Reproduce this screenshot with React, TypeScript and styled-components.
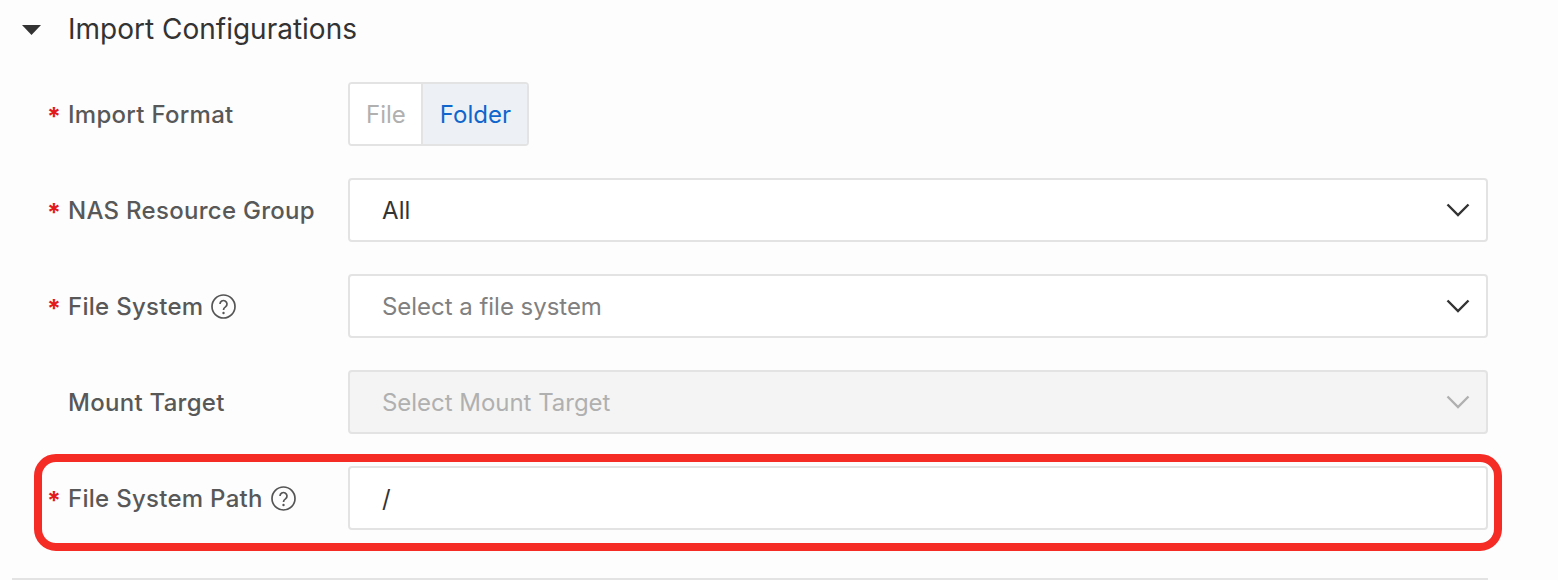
import React from "react";
import styled, { createGlobalStyle } from "styled-components";

const Global = createGlobalStyle`
  html, body { margin: 0; padding: 0; background: #fdfdfd; }
  body { font-family: Inter, "Liberation Sans", sans-serif; }
`;

const Page = styled.div`
  width: 1558px;
  height: 580px;
  overflow: hidden;
  box-sizing: border-box;
`;

const Header = styled.div`
  height: 56px;
  display: flex;
  align-items: center;
  padding-left: 22px;
  gap: 27px;
  margin-bottom: 26px;
`;

const Caret = styled.svg`
  width: 19px;
  height: 10px;
  display: block;
  margin-top: 3px;
`;

const Title = styled.div`
  font-size: 28px;
  line-height: 32px;
  color: #333;
  padding-top: 1px;
`;

const Form = styled.div`
  width: 1488px;
  padding-left: 48px;
  box-sizing: border-box;
  display: flex;
  flex-direction: column;
  gap: 32px;
`;

const Row = styled.div<{ $highlight?: boolean }>`
  position: relative;
  display: flex;
  align-items: center;
  height: 64px;
  ${(p) =>
    p.$highlight &&
    `&::after {
      content: "";
      position: absolute;
      left: -14px;
      right: -14px;
      top: -12px;
      bottom: -21px;
      border: 8px solid #f52b26;
      border-radius: 22px;
      pointer-events: none;
    }`}
`;

const Label = styled.div`
  width: 300px;
  flex: none;
  display: flex;
  align-items: center;
  font-size: 24px;
  font-weight: 550;
  color: #585858;
  letter-spacing: 0.28px;
  padding-top: 1px;
`;

const Star = styled.span`
  width: 21px;
  margin-left: -1px;
  flex: none;
  color: #e31a1a;
  font-size: 25px;
  line-height: 1;
  height: 20px;
  font-weight: 700;
  letter-spacing: 0;
`;

const Help = styled.svg`
  width: 25px;
  height: 25px;
  margin-left: 8px;
  display: block;
`;

const Segmented = styled.div`
  display: flex;
  height: 64px;
  box-sizing: border-box;
  border: 2px solid #e3e3e3;
  border-radius: 4px;
  overflow: hidden;
  background: #fff;
`;

const Segment = styled.div<{ $active?: boolean }>`
  display: flex;
  align-items: center;
  padding: 1px 16px 0;
  font-size: 24px;
  color: ${(p) => (p.$active ? "#0f66cc" : "#b0b0b0")};
  background: ${(p) => (p.$active ? "#edf0f5" : "#fff")};
  ${(p) => (p.$active ? "border-left: 2px solid #e3e3e3; padding-left: 17px;" : "padding-right: 15px;")}
`;

const Field = styled.div<{ $disabled?: boolean }>`
  flex: 1;
  height: 64px;
  box-sizing: border-box;
  border: 2px solid #e3e3e3;
  border-radius: 4px;
  background: ${(p) => (p.$disabled ? "#f4f4f4" : "#fff")};
  display: flex;
  align-items: center;
  justify-content: space-between;
  padding: 0 16px 0 32px;
  font-size: 24px;
`;

const Value = styled.span<{ $tone: "value" | "placeholder" | "disabled" }>`
  color: ${(p) => (p.$tone === "value" ? "#333" : p.$tone === "placeholder" ? "#808080" : "#b0b0b0")};
  letter-spacing: ${(p) => (p.$tone === "value" ? "0.1px" : "-0.03px")};
  padding-top: 1px;
`;

const Chevron = styled.svg`
  width: 24px;
  height: 14px;
  display: block;
`;

const Divider = styled.div`
  width: 1476px;
  height: 2px;
  background: #e3e3e3;
  margin: 48px 0 0 12px;
`;

const HelpIcon = () => (
  <Help viewBox="0 0 25 25" fill="none">
    <circle cx="12.5" cy="12.5" r="11.5" stroke="#555" strokeWidth="1.7" />
    <path d="M9 10a3.5 3.5 0 1 1 5.5 2.9c-1.2.8-2 1.4-2 3" stroke="#555" strokeWidth="1.7" fill="none" />
    <circle cx="12.5" cy="19" r="1.2" fill="#555" />
  </Help>
);

const Arrow = ({ color }: { color: string }) => (
  <Chevron viewBox="0 0 24 14" fill="none">
    <path d="M1.5 1.5 12 12 22.5 1.5" stroke={color} strokeWidth="2.4" />
  </Chevron>
);

export default function App() {
  return (
    <Page>
      <Global />
      <Header>
        <Caret viewBox="0 0 19 10">
          <path d="M0 0h19L9.5 10z" fill="#333" />
        </Caret>
        <Title>Import Configurations</Title>
      </Header>
      <Form>
        <Row>
          <Label>
            <Star>*</Star>Import Format
          </Label>
          <Segmented>
            <Segment>File</Segment>
            <Segment $active>Folder</Segment>
          </Segmented>
        </Row>
        <Row>
          <Label>
            <Star>*</Star>NAS Resource Group
          </Label>
          <Field>
            <Value $tone="value">All</Value>
            <Arrow color="#333" />
          </Field>
        </Row>
        <Row>
          <Label>
            <Star>*</Star>File System
            <HelpIcon />
          </Label>
          <Field>
            <Value $tone="placeholder">Select a file system</Value>
            <Arrow color="#333" />
          </Field>
        </Row>
        <Row>
          <Label>
            <Star />
            Mount Target
          </Label>
          <Field $disabled>
            <Value $tone="disabled">Select Mount Target</Value>
            <Arrow color="#b0b0b0" />
          </Field>
        </Row>
        <Row $highlight>
          <Label>
            <Star>*</Star>File System Path
            <HelpIcon />
          </Label>
          <Field>
            <Value $tone="value">/</Value>
          </Field>
        </Row>
      </Form>
      <Divider />
    </Page>
  );
}
